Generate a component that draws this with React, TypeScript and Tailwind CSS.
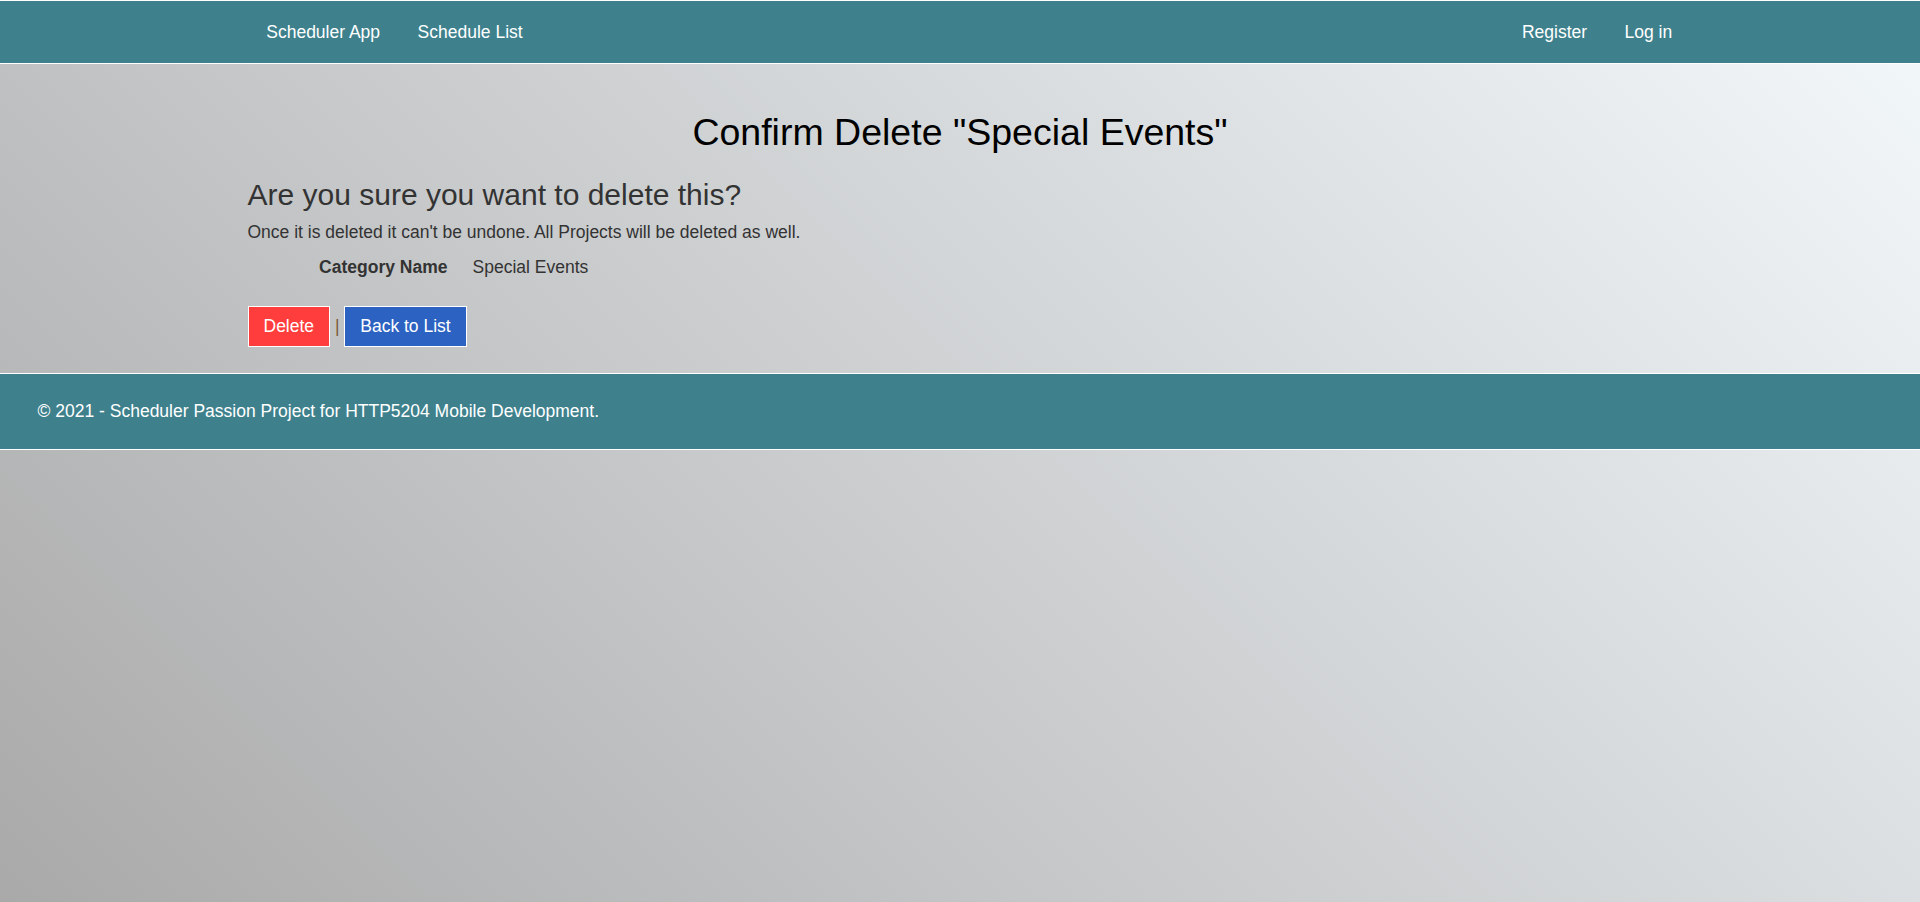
import React from 'react';

const font = { fontFamily: '"Liberation Sans", Arial, Helvetica, sans-serif' };

function NavBar() {
    return (
        <nav className="w-full border-y border-white bg-[#3e818d]">
            <div className="mx-auto flex h-[62px] w-[1462.5px] items-center justify-between text-[17.5px] leading-[25px] text-white">
                <div className="ml-[18.75px] flex items-center">
                    <a href="#" className="px-[18.75px]">Scheduler App</a>
                    <a href="#" className="px-[18.75px]">Schedule List</a>
                </div>
                <div className="flex items-center">
                    <a href="#" className="px-[18.75px]">Register</a>
                    <a href="#" className="pl-[18.75px] pr-[19px]">Log in</a>
                </div>
            </div>
        </nav>
    );
}

function Footer() {
    return (
        <footer className="mt-[25.5px] w-full border-y border-white bg-[#3e818d] px-[37.5px] py-[25px] text-[17.5px] leading-[25px] text-white">
            <p>© 2021 - Scheduler Passion Project for HTTP5204 Mobile Development.</p>
        </footer>
    );
}

export default function App() {
    return (
        <div
            className="min-h-screen w-full bg-[linear-gradient(45deg,#a9a9a9,#f3f8fb)] text-[17.5px] leading-[25px] text-[#333]"
            style={font}
        >
            <NavBar />
            <main className="mx-auto w-[1462.5px] px-[18.75px]">
                <h2 className="mt-[47.5px] text-center text-[37.5px] leading-[41.25px] text-black">
                    Confirm Delete "Special Events"
                </h2>
                <h3 className="mt-[25.5px] text-[30px] leading-[33px]">Are you sure you want to delete this?</h3>
                <p className="mt-[9px]">Once it is deleted it can't be undone. All Projects will be deleted as well.</p>
                <dl className="mt-[10px] flex">
                    <dt className="w-[200px] text-right font-bold">Category Name</dt>
                    <dd className="ml-[25px]">Special Events</dd>
                </dl>
                <div className="mt-[25.5px] flex items-center">
                    <button className="h-[41.5px] border border-white bg-[#ff3d3d] px-[15px] text-white">Delete</button>
                    <span className="px-[4.8px] text-[#7a5a36]">|</span>
                    <button className="h-[41.5px] border border-white bg-[#2c62c1] px-[15px] text-white">Back to List</button>
                </div>
            </main>
            <Footer />
        </div>
    );
}
